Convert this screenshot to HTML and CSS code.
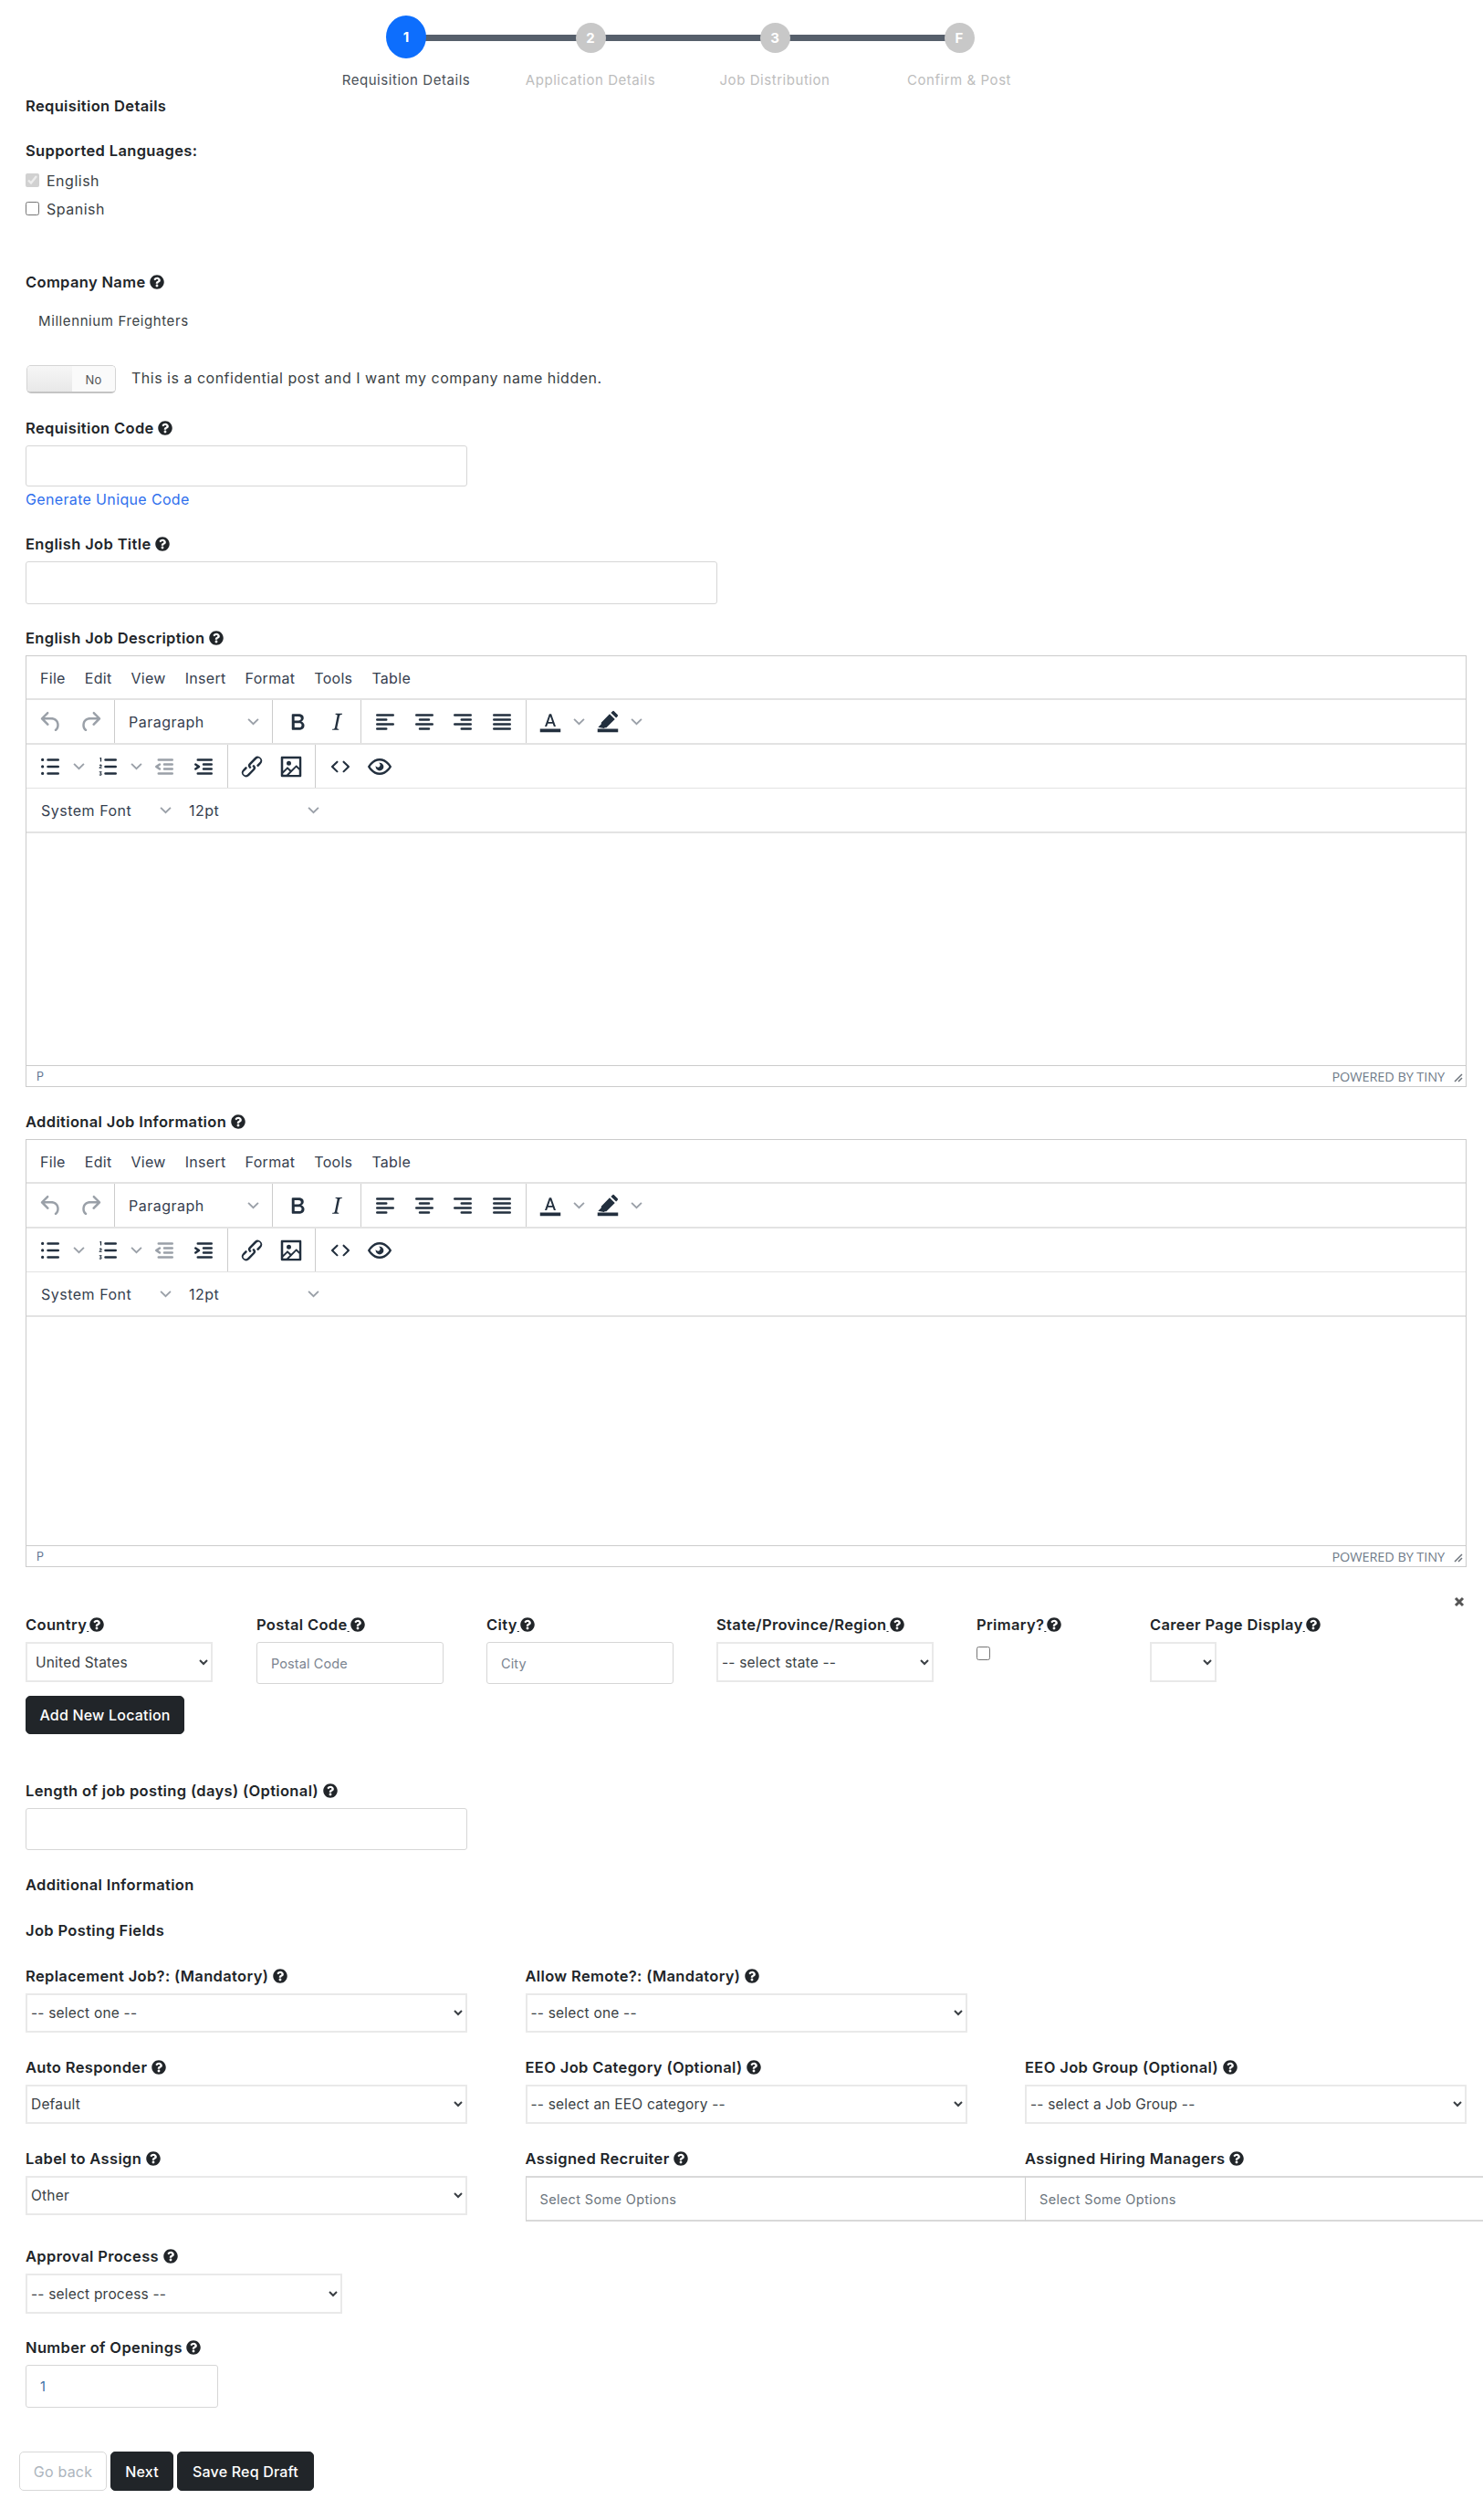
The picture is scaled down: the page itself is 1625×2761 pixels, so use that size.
FILE: index.html
```html
<!DOCTYPE html>
<html lang="en">

<head>
  <meta charset="UTF-8">
  <title>Requisition Details</title>
  <link rel="stylesheet" href="styles.css">
</head>

<body>
  <svg class="sprite" xmlns="http://www.w3.org/2000/svg">
    <symbol id="help" viewBox="0 0 512 512"><path d="M504 256c0 136.997-111.043 248-248 248S8 392.997 8 256C8 119.083 119.043 8 256 8s248 111.083 248 248zM262.655 90c-54.497 0-89.255 22.957-116.549 63.758-3.536 5.286-2.353 12.415 2.715 16.258l34.699 26.31c5.205 3.947 12.621 3.008 16.665-2.122 17.864-22.658 30.113-35.797 57.303-35.797 20.429 0 45.698 13.148 45.698 32.958 0 14.976-12.363 22.667-32.534 33.976C247.128 238.528 216 254.941 216 296v4c0 6.627 5.373 12 12 12h56c6.627 0 12-5.373 12-12v-1.333c0-28.462 83.186-29.647 83.186-106.667 0-58.002-60.165-102-116.531-102zM256 338c-25.365 0-46 20.635-46 46 0 25.364 20.635 46 46 46s46-20.636 46-46c0-25.365-20.635-46-46-46z"/></symbol>
    <symbol id="undo" viewBox="0 0 24 24"><path d="M6.4 8H12c3.7 0 6.2 2 6.8 5.1.6 2.7-.4 5.6-2.3 6.8a1 1 0 0 1-1-1.800c1.100-.6 1.800-2.700 1.400-4.600-.5-2.100-2.100-3.500-4.900-3.500H6.400l3.300 3.300a1 1 0 1 1-1.400 1.400l-5-5a1 1 0 0 1 0-1.400l5-5a1 1 0 0 1 1.400 1.400L6.400 8z"/></symbol>
    <symbol id="redo" viewBox="0 0 24 24"><path d="M17.600 8H12c-3.700 0-6.200 2-6.800 5.100-.6 2.700.4 5.600 2.300 6.800a1 1 0 0 0 1-1.800c-1.100-.6-1.800-2.700-1.400-4.600.5-2.100 2.100-3.500 4.900-3.500h5.600l-3.300 3.300a1 1 0 1 0 1.400 1.400l5-5a1 1 0 0 0 0-1.400l-5-5a1 1 0 0 0-1.400 1.400L17.600 8z"/></symbol>
    <symbol id="bold" viewBox="0 0 24 24"><path d="M7.800 19c-.3 0-.5 0-.6-.2l-.2-.5V5.700c0-.2 0-.4.2-.5l.6-.2h5c1.500 0 2.700.3 3.500 1 .7.600 1.100 1.400 1.100 2.500a3 3 0 0 1-.6 1.900c-.4.600-1 1-1.600 1.200.4.100.9.300 1.300.6s.8.700 1 1.200c.4.400.5 1 .5 1.600 0 1.300-.4 2.300-1.300 3-.8.700-2.100 1-3.800 1H7.800zm5-8.300c.6 0 1.200-.1 1.600-.5.400-.3.600-.7.600-1.300 0-1.100-.8-1.700-2.300-1.700H9.300v3.500h3.400zm.5 6c.7 0 1.300-.1 1.700-.4.400-.4.600-.9.600-1.500s-.2-1-.7-1.400c-.4-.3-1-.4-2-.4H9.400v3.800h4z"/></symbol>
    <symbol id="italic" viewBox="0 0 24 24"><path d="M16.700 4.700l-.1.900h-.3c-.6 0-1 0-1.400.3-.3.300-.4.600-.5 1.100l-2.100 9.800v.6c0 .5.400.8 1.400.8h.2l-.2.8H8l.2-.8h.2c1.100 0 1.800-.5 2-1.500l2-9.800.1-.5c0-.6-.4-.8-1.400-.8h-.3l.2-.9h5.800z"/></symbol>
    <symbol id="align-left" viewBox="0 0 24 24"><path d="M5 5h14a1 1 0 0 1 0 2H5a1 1 0 1 1 0-2zm0 4h8a1 1 0 0 1 0 2H5a1 1 0 1 1 0-2zm0 8h8a1 1 0 0 1 0 2H5a1 1 0 0 1 0-2zm0-4h14a1 1 0 0 1 0 2H5a1 1 0 0 1 0-2z"/></symbol>
    <symbol id="align-center" viewBox="0 0 24 24"><path d="M5 5h14a1 1 0 0 1 0 2H5a1 1 0 1 1 0-2zm3 4h8a1 1 0 0 1 0 2H8a1 1 0 1 1 0-2zm0 8h8a1 1 0 0 1 0 2H8a1 1 0 0 1 0-2zm-3-4h14a1 1 0 0 1 0 2H5a1 1 0 0 1 0-2z"/></symbol>
    <symbol id="align-right" viewBox="0 0 24 24"><path d="M5 5h14a1 1 0 0 1 0 2H5a1 1 0 1 1 0-2zm6 4h8a1 1 0 0 1 0 2h-8a1 1 0 0 1 0-2zm0 8h8a1 1 0 0 1 0 2h-8a1 1 0 0 1 0-2zm-6-4h14a1 1 0 0 1 0 2H5a1 1 0 0 1 0-2z"/></symbol>
    <symbol id="align-justify" viewBox="0 0 24 24"><path d="M5 5h14a1 1 0 0 1 0 2H5a1 1 0 1 1 0-2zm0 4h14a1 1 0 0 1 0 2H5a1 1 0 1 1 0-2zm0 4h14a1 1 0 0 1 0 2H5a1 1 0 0 1 0-2zm0 4h14a1 1 0 0 1 0 2H5a1 1 0 0 1 0-2z"/></symbol>
    <symbol id="text-color" viewBox="0 0 24 24"><path d="M3 18h18v3H3z"/><path fill-rule="evenodd" d="M8.900 16H7.200l3.900-11h1.800l3.900 11h-1.700l-.9-2.700H9.800zm1.400-4.100h3.400L12 6.900z"/></symbol>
    <symbol id="highlight" viewBox="0 0 24 24"><path d="M3 18h18v3H3z"/><path d="M3.500 16.500l2.800-2.700-.1-1.300L13.600 5l4.600 4.600-7.500 7.400-1.300-.1-.7.600zM14.700 3.900l1.300-1.200a1.200 1.200 0 0 1 1.700 0l2.800 2.800a1.200 1.200 0 0 1 0 1.700l-1.200 1.200z"/></symbol>
    <symbol id="bullist" viewBox="0 0 24 24"><path d="M10 5h9a1 1 0 0 1 0 2h-9a1 1 0 0 1 0-2zm0 6h9a1 1 0 0 1 0 2h-9a1 1 0 0 1 0-2zm0 6h9a1 1 0 0 1 0 2h-9a1 1 0 0 1 0-2zM4 6a1.300 1.300 0 1 1 2.600 0A1.300 1.300 0 0 1 4 6zm0 6a1.300 1.300 0 1 1 2.600 0A1.300 1.300 0 0 1 4 12zm0 6a1.300 1.300 0 1 1 2.600 0A1.300 1.300 0 0 1 4 18z"/></symbol>
    <symbol id="numlist" viewBox="0 0 24 24"><path d="M10 17h9a1 1 0 0 1 0 2h-9a1 1 0 0 1 0-2zm0-6h9a1 1 0 0 1 0 2h-9a1 1 0 0 1 0-2zm0-6h9a1 1 0 0 1 0 2h-9a1 1 0 1 1 0-2z"/><path d="M5.300 4h1.200v3.500h-1V5H5zM4.600 10.800c.2-.6.800-.9 1.400-.8.600.1 1 .6.900 1.100 0 .4-.3.700-.6.900l-.8.500h1.400v.8H4.500v-.7l1.400-1.100c.2-.1.200-.3.100-.4-.2-.2-.4 0-.5.200zM4.600 16.200h2.200v.6l-.8.700c.6.100.9.500.9 1 0 .7-.6 1.200-1.300 1.200-.5 0-1-.2-1.200-.6l.6-.5c.1.200.3.300.6.300.2 0 .4-.2.400-.4s-.2-.3-.5-.3h-.3v-.6l.6-.6H4.600z"/></symbol>
    <symbol id="outdent" viewBox="0 0 24 24"><path d="M7 5h12a1 1 0 0 1 0 2H7a1 1 0 1 1 0-2zm5 4h7a1 1 0 0 1 0 2h-7a1 1 0 0 1 0-2zm0 4h7a1 1 0 0 1 0 2h-7a1 1 0 0 1 0-2zm-5 4h12a1 1 0 0 1 0 2H7a1 1 0 0 1 0-2zm1.600-3.800a1 1 0 0 1-1.200 1.600l-3-2a1 1 0 0 1 0-1.600l3-2a1 1 0 0 1 1.200 1.600L6.800 12l1.800 1.200z"/></symbol>
    <symbol id="indent" viewBox="0 0 24 24"><path d="M7 5h12a1 1 0 0 1 0 2H7a1 1 0 1 1 0-2zm5 4h7a1 1 0 0 1 0 2h-7a1 1 0 0 1 0-2zm0 4h7a1 1 0 0 1 0 2h-7a1 1 0 0 1 0-2zm-5 4h12a1 1 0 0 1 0 2H7a1 1 0 0 1 0-2zm-2.600-3.800L6.200 12l-1.800-1.200a1 1 0 0 1 1.200-1.600l3 2a1 1 0 0 1 0 1.600l-3 2a1 1 0 1 1-1.200-1.600z"/></symbol>
    <symbol id="link" viewBox="0 0 24 24"><path d="M6.200 12.300a1 1 0 0 1 1.400 1.400l-2 2a2 2 0 1 0 2.600 2.800l4.800-4.800a1 1 0 0 0 0-1.400 1 1 0 1 1 1.400-1.300 2.900 2.900 0 0 1 0 4L9.600 20a3.900 3.900 0 0 1-5.500-5.500l2-2.200zm11.600-.6a1 1 0 0 1-1.400-1.400l2-2a2 2 0 1 0-2.600-2.800L11 10.300a1 1 0 0 0 0 1.400A1 1 0 1 1 9.600 13a2.900 2.900 0 0 1 0-4L14.400 4a3.900 3.900 0 0 1 5.500 5.500l-2 2.200z"/></symbol>
    <symbol id="image" viewBox="0 0 24 24"><path d="M5 15.700l3.300-3.200c.3-.3.700-.3 1 0L12 15l4.100-4c.3-.4.800-.4 1 0l2 1.900V5H5v10.700zM5 18v1h3l2.800-2.900-2-2L5 17.900zm14-3l-2.500-2.400-6.400 6.500H19v-4zM4 3h16c.6 0 1 .4 1 1v16c0 .6-.4 1-1 1H4a1 1 0 0 1-1-1V4c0-.6.400-1 1-1zm6 8a2 2 0 1 0 0-4 2 2 0 0 0 0 4z"/></symbol>
    <symbol id="code" viewBox="0 0 24 24"><path d="M9.800 15.700c.3.300.3.800 0 1-.3.400-.9.400-1.200 0l-4.400-4.100a.8.800 0 0 1 0-1.200l4.400-4.200c.3-.3.900-.3 1.200 0 .3.300.3.800 0 1.100L6 12l3.800 3.700zm4.400 0c-.3.300-.3.800 0 1 .3.400.9.400 1.200 0l4.400-4.100c.3-.3.300-.9 0-1.200l-4.400-4.200a.8.800 0 0 0-1.200 0c-.3.300-.3.800 0 1.100L18 12l-3.800 3.700z"/></symbol>
    <symbol id="eye" viewBox="0 0 24 24"><path fill-rule="evenodd" d="M12 4.800c3.200 0 6 1.500 8.200 4a17 17 0 0 1 2.300 3.200 17 17 0 0 1-2.300 3.200c-2.200 2.500-5 4-8.200 4s-6-1.500-8.200-4A17 17 0 0 1 1.500 12a17 17 0 0 1 2.300-3.200c2.200-2.500 5-4 8.200-4zm0 2c-2.500 0-4.700 1.200-6.700 3.200-.7.700-1.300 1.400-1.600 2 .3.600.9 1.300 1.600 2 2 2 4.200 3.200 6.700 3.200s4.700-1.200 6.700-3.200c.7-.7 1.300-1.400 1.600-2-.3-.6-.9-1.300-1.600-2-2-2-4.200-3.200-6.700-3.200zm0 1.700a3.500 3.500 0 1 1-3.500 3.500c0-.3 0-.6.100-.9a2 2 0 1 0 2.500-2.500c.3-.1.600-.1.900-.1z"/></symbol>
    <symbol id="chevron" viewBox="0 0 12 8"><path d="M1 1.500l5 5 5-5" fill="none" stroke="currentColor" stroke-width="1.700"/></symbol>
  </svg>

  <main class="page">
    <div class="stepper">
      <div class="step step-active"><span class="step-dot">1</span><span class="step-name">Requisition Details</span></div>
      <div class="step"><span class="step-dot">2</span><span class="step-name">Application Details</span></div>
      <div class="step"><span class="step-dot">3</span><span class="step-name">Job Distribution</span></div>
      <div class="step"><span class="step-dot">F</span><span class="step-name">Confirm &amp; Post</span></div>
    </div>

    <div class="label sect-head">Requisition Details</div>

    <div class="label lang-head">Supported Languages:</div>
    <label class="check-row"><input type="checkbox" checked disabled> English</label>
    <label class="check-row"><input type="checkbox"> Spanish</label>

    <div class="label company-label">Company Name <svg class="help"><use href="#help"/></svg></div>
    <div class="company-name">Millennium Freighters</div>

    <div class="confidential">
      <div class="switch"><span class="switch-handle"></span><span class="switch-off">No</span></div>
      <span class="confidential-text">This is a confidential post and I want my company name hidden.</span>
    </div>

    <div class="label">Requisition Code <svg class="help"><use href="#help"/></svg></div>
    <input class="input w-third h-45" type="text">
    <a class="gen-link" href="#">Generate Unique Code</a>

    <div class="label">English Job Title <svg class="help"><use href="#help"/></svg></div>
    <input class="input w-title" type="text">

    <div class="label after-input">English Job Description <svg class="help"><use href="#help"/></svg></div>
    <div class="editor">
      <div class="menubar"><span>File</span><span>Edit</span><span>View</span><span>Insert</span><span>Format</span><span>Tools</span><span>Table</span></div>
      <div class="toolbar thick">
        <div class="group g-history">
          <span class="tb muted"><svg><use href="#undo"/></svg></span>
          <span class="tb muted"><svg><use href="#redo"/></svg></span>
        </div>
        <div class="group g-block"><span class="pick-text">Paragraph</span><svg class="chev"><use href="#chevron"/></svg></div>
        <div class="group g-format">
          <span class="tb"><svg><use href="#bold"/></svg></span>
          <span class="tb"><svg><use href="#italic"/></svg></span>
        </div>
        <div class="group g-align">
          <span class="tb"><svg><use href="#align-left"/></svg></span>
          <span class="tb"><svg><use href="#align-center"/></svg></span>
          <span class="tb"><svg><use href="#align-right"/></svg></span>
          <span class="tb"><svg><use href="#align-justify"/></svg></span>
        </div>
        <div class="group g-color">
          <span class="tb"><svg><use href="#text-color"/></svg></span>
          <span class="tb-chev"><svg class="chev"><use href="#chevron"/></svg></span>
          <span class="tb"><svg><use href="#highlight"/></svg></span>
          <span class="tb-chev"><svg class="chev"><use href="#chevron"/></svg></span>
        </div>
      </div>
      <div class="toolbar thin">
        <div class="group g-lists">
          <span class="tb"><svg><use href="#bullist"/></svg></span>
          <span class="tb-chev"><svg class="chev"><use href="#chevron"/></svg></span>
          <span class="tb"><svg><use href="#numlist"/></svg></span>
          <span class="tb-chev"><svg class="chev"><use href="#chevron"/></svg></span>
          <span class="tb muted"><svg><use href="#outdent"/></svg></span>
          <span class="tb"><svg><use href="#indent"/></svg></span>
        </div>
        <div class="group g-insert">
          <span class="tb"><svg><use href="#link"/></svg></span>
          <span class="tb"><svg><use href="#image"/></svg></span>
        </div>
        <div class="group g-tools">
          <span class="tb"><svg><use href="#code"/></svg></span>
          <span class="tb"><svg><use href="#eye"/></svg></span>
        </div>
      </div>
      <div class="toolbar thick fontbar">
        <span class="font-pick">System Font<svg class="chev"><use href="#chevron"/></svg></span>
        <span class="size-pick">12pt<svg class="chev"><use href="#chevron"/></svg></span>
      </div>
      <div class="edit-area"></div>
      <div class="statusbar"><span class="path">P</span><span class="brand">POWERED BY TINY</span><svg class="grip" viewBox="0 0 10 10"><path d="M1 9l8-8M5 9l4-4" fill="none" stroke="#6d737b" stroke-width="1.500"/></svg></div>
    </div>

    <div class="label editor-gap">Additional Job Information <svg class="help"><use href="#help"/></svg></div>
    <div class="editor">
      <div class="menubar"><span>File</span><span>Edit</span><span>View</span><span>Insert</span><span>Format</span><span>Tools</span><span>Table</span></div>
      <div class="toolbar thick">
        <div class="group g-history">
          <span class="tb muted"><svg><use href="#undo"/></svg></span>
          <span class="tb muted"><svg><use href="#redo"/></svg></span>
        </div>
        <div class="group g-block"><span class="pick-text">Paragraph</span><svg class="chev"><use href="#chevron"/></svg></div>
        <div class="group g-format">
          <span class="tb"><svg><use href="#bold"/></svg></span>
          <span class="tb"><svg><use href="#italic"/></svg></span>
        </div>
        <div class="group g-align">
          <span class="tb"><svg><use href="#align-left"/></svg></span>
          <span class="tb"><svg><use href="#align-center"/></svg></span>
          <span class="tb"><svg><use href="#align-right"/></svg></span>
          <span class="tb"><svg><use href="#align-justify"/></svg></span>
        </div>
        <div class="group g-color">
          <span class="tb"><svg><use href="#text-color"/></svg></span>
          <span class="tb-chev"><svg class="chev"><use href="#chevron"/></svg></span>
          <span class="tb"><svg><use href="#highlight"/></svg></span>
          <span class="tb-chev"><svg class="chev"><use href="#chevron"/></svg></span>
        </div>
      </div>
      <div class="toolbar thin">
        <div class="group g-lists">
          <span class="tb"><svg><use href="#bullist"/></svg></span>
          <span class="tb-chev"><svg class="chev"><use href="#chevron"/></svg></span>
          <span class="tb"><svg><use href="#numlist"/></svg></span>
          <span class="tb-chev"><svg class="chev"><use href="#chevron"/></svg></span>
          <span class="tb muted"><svg><use href="#outdent"/></svg></span>
          <span class="tb"><svg><use href="#indent"/></svg></span>
        </div>
        <div class="group g-insert">
          <span class="tb"><svg><use href="#link"/></svg></span>
          <span class="tb"><svg><use href="#image"/></svg></span>
        </div>
        <div class="group g-tools">
          <span class="tb"><svg><use href="#code"/></svg></span>
          <span class="tb"><svg><use href="#eye"/></svg></span>
        </div>
      </div>
      <div class="toolbar thick fontbar">
        <span class="font-pick">System Font<svg class="chev"><use href="#chevron"/></svg></span>
        <span class="size-pick">12pt<svg class="chev"><use href="#chevron"/></svg></span>
      </div>
      <div class="edit-area short"></div>
      <div class="statusbar"><span class="path">P</span><span class="brand">POWERED BY TINY</span><svg class="grip" viewBox="0 0 10 10"><path d="M1 9l8-8M5 9l4-4" fill="none" stroke="#6d737b" stroke-width="1.500"/></svg></div>
    </div>

    <div class="location">
      <svg class="loc-close" viewBox="0 0 12 12"><path d="M2 2l8 8M10 2l-8 8" stroke="#555" stroke-width="3"/></svg>
      <div class="loc-grid">
        <div>
          <div class="label">Country<u class="gap">&nbsp;</u><svg class="help"><use href="#help"/></svg></div>
          <select class="select w-country h-44"><option>United States</option></select>
        </div>
        <div>
          <div class="label">Postal Code<u class="gap">&nbsp;</u><svg class="help"><use href="#help"/></svg></div>
          <input class="input w-full h-46" type="text" placeholder="Postal Code">
        </div>
        <div>
          <div class="label">City<u class="gap">&nbsp;</u><svg class="help"><use href="#help"/></svg></div>
          <input class="input w-full h-46" type="text" placeholder="City">
        </div>
        <div>
          <div class="label">State/Province/Region<u class="gap">&nbsp;</u><svg class="help"><use href="#help"/></svg></div>
          <select class="select w-full h-44"><option>-- select state --</option></select>
        </div>
        <div>
          <div class="label">Primary?<u class="gap">&nbsp;</u><svg class="help"><use href="#help"/></svg></div>
          <input class="primary-check" type="checkbox">
        </div>
        <div>
          <div class="label">Career Page Display<u class="gap">&nbsp;</u><svg class="help"><use href="#help"/></svg></div>
          <select class="select career h-44"><option></option></select>
        </div>
      </div>
      <button class="btn add-location" type="button">Add New Location</button>
    </div>

    <div class="label length-label">Length of job posting (days) (Optional) <svg class="help"><use href="#help"/></svg></div>
    <input class="input w-third h-46" type="text">

    <div class="label info-head">Additional Information</div>
    <div class="label fields-head">Job Posting Fields</div>

    <div class="field-grid">
      <div>
        <div class="label">Replacement Job?: (Mandatory) <svg class="help"><use href="#help"/></svg></div>
        <select class="select w-full"><option>-- select one --</option></select>
      </div>
      <div>
        <div class="label">Allow Remote?: (Mandatory) <svg class="help"><use href="#help"/></svg></div>
        <select class="select w-full"><option>-- select one --</option></select>
      </div>
      <div></div>
      <div>
        <div class="label">Auto Responder <svg class="help"><use href="#help"/></svg></div>
        <select class="select w-full"><option>Default</option></select>
      </div>
      <div>
        <div class="label">EEO Job Category (Optional) <svg class="help"><use href="#help"/></svg></div>
        <select class="select w-full"><option>-- select an EEO category --</option></select>
      </div>
      <div>
        <div class="label">EEO Job Group (Optional) <svg class="help"><use href="#help"/></svg></div>
        <select class="select w-full"><option>-- select a Job Group --</option></select>
      </div>
      <div>
        <div class="label">Label to Assign <svg class="help"><use href="#help"/></svg></div>
        <select class="select w-full"><option>Other</option></select>
      </div>
      <div>
        <div class="label">Assigned Recruiter <svg class="help"><use href="#help"/></svg></div>
        <div class="chosen">Select Some Options</div>
      </div>
      <div>
        <div class="label">Assigned Hiring Managers <svg class="help"><use href="#help"/></svg></div>
        <div class="chosen chosen-last">Select Some Options</div>
      </div>
    </div>

    <div class="label approval-label">Approval Process <svg class="help"><use href="#help"/></svg></div>
    <select class="select w-approval h-44"><option>-- select process --</option></select>

    <div class="label after-approval">Number of Openings <svg class="help"><use href="#help"/></svg></div>
    <input class="input w-openings" type="text" value="1">

    <div class="actions">
      <button class="btn btn-back" type="button">Go back</button>
      <button class="btn btn-next" type="button">Next</button>
      <button class="btn btn-save" type="button">Save Req Draft</button>
    </div>
  </main>
</body>

</html>
```

FILE: styles.css
```css
* {
  box-sizing: border-box;
}
html, body {
  margin: 0;
  padding: 0;
  background: #fff;
}
body {
  font-family: Inter, "Liberation Sans", sans-serif;
  font-size: 16px;
  letter-spacing: 0.5px;
  color: #212529;
  overflow-x: hidden;
}
.sprite {
  display: none;
}
.page {
  height: 2761px;
  padding: 0 18px 0 28px;
  overflow: hidden;
}

/* stepper */
.stepper {
  display: flex;
  height: 104px;
  margin-left: 316px;
}
.step {
  position: relative;
  width: 202px;
  display: flex;
  flex-direction: column;
  align-items: center;
  color: #bdbdbd;
  font-size: 15px;
  letter-spacing: 0.55px;
}
.step::before {
  content: "";
  position: absolute;
  top: 38px;
  left: 50%;
  width: 202px;
  height: 7px;
  background: #565f6b;
}
.step:last-child::before {
  display: none;
}
.step-dot {
  position: relative;
  width: 33px;
  height: 33px;
  margin: 25px 0 18px;
  border-radius: 50%;
  background: #c8c8c8;
  color: #fff;
  font-weight: 700;
  font-size: 15px;
  letter-spacing: 0;
  line-height: 33px;
  text-align: center;
}
.step-active {
  color: #495057;
}
.step-active .step-dot {
  width: 44px;
  height: 47px;
  margin: 17px 0 12px;
  background: #0d6efd;
  line-height: 47px;
}
.step-name {
  line-height: 24px;
  white-space: nowrap;
}

/* labels and fields */
.label {
  height: 24px;
  line-height: 24px;
  margin-bottom: 7px;
  font-size: 16.5px;
  font-weight: 600;
  letter-spacing: 0.35px;
  color: #212529;
  white-space: nowrap;
}
.help {
  width: 16px;
  height: 16px;
  vertical-align: -2px;
  fill: #212529;
}
.gap {
  font-size: 6px;
  font-weight: 400;
  margin-right: 1px;
}
.sect-head {
  margin-bottom: 25px;
}
.lang-head {
  margin-bottom: 5px;
}
.check-row {
  display: flex;
  align-items: center;
  gap: 8px;
  height: 31px;
  color: #3a3f44;
}
.check-row input {
  width: 15px;
  height: 15px;
  margin: 0;
}
.company-label {
  margin-top: 53px;
  margin-bottom: 19px;
}
.company-name {
  height: 24px;
  line-height: 24px;
  padding-left: 14px;
  font-size: 15px;
  letter-spacing: 0.6px;
  color: #3a3f44;
}
.confidential {
  display: flex;
  align-items: center;
  gap: 17px;
  height: 31px;
  margin: 36px 0 26px;
  color: #3a3f44;
}
.confidential-text {
  margin-bottom: 3px;
}
.switch {
  display: flex;
  width: 98px;
  height: 31px;
  margin-left: 1px;
  border: 1px solid #d4d4d4;
  border-bottom: 2px solid #c4c4c4;
  border-radius: 5px;
  overflow: hidden;
}
.switch-handle {
  width: 49px;
  background: linear-gradient(#f6f6f6, #e8e8e8);
}
.switch-off {
  flex: 1;
  text-align: center;
  line-height: 30px;
  font-size: 13px;
  letter-spacing: 0.3px;
  color: #555;
  background: #fafafa;
}
.input {
  display: block;
  height: 47px;
  padding: 0 15px;
  border: 1px solid #d6d6d6;
  border-radius: 3px;
  background: #fff;
  font: inherit;
  font-size: 14.5px;
  letter-spacing: 0.1px;
  color: #3a6ea5;
}
.input::placeholder {
  color: #7b8490;
}
.select {
  display: block;
  height: 43px;
  padding: 0;
  border: 2px solid #e9e9e9;
  border-radius: 0;
  background: #fff;
  font: inherit;
  font-size: 15.5px;
  letter-spacing: 0.2px;
  color: #3a3f44;
}
.h-44 {
  height: 44px;
}
.h-45 {
  height: 45px;
}
.h-46 {
  height: 46px;
}
.w-full {
  width: 100%;
}
.w-country {
  width: 205px;
  padding-left: 5px;
}
.w-third {
  width: 484px;
}
.w-title {
  width: 758px;
}
.w-approval {
  width: 347px;
}
.w-openings {
  width: 211px;
}
.career {
  width: 73px;
}
.gen-link {
  display: block;
  height: 24px;
  margin: 2px 0 25px;
  line-height: 24px;
  letter-spacing: 0.35px;
  color: #2f6fed;
  text-decoration: none;
}
.after-input {
  margin-top: 25px;
}

/* editor */
.editor {
  border: 1px solid #ccc;
  background: #fff;
  color: #36404f;
}
.menubar {
  display: flex;
  gap: 21px;
  height: 48px;
  padding: 1px 0 0 15px;
  align-items: center;
  border-bottom: 2px solid #e3e3e3;
  letter-spacing: 0.3px;
}
.toolbar {
  display: flex;
  height: 49px;
}
.thick {
  border-bottom: 2px solid #e3e3e3;
}
.thin {
  height: 48px;
  border-bottom: 1px solid #e3e3e3;
}
.group {
  display: flex;
  align-items: center;
  height: 100%;
  border-right: 1px solid #ccc;
}
.g-history {
  width: 97px;
  padding-left: 6px;
}
.g-block {
  width: 173px;
  padding-left: 15px;
  justify-content: space-between;
  padding-right: 14px;
}
.g-format {
  width: 97px;
  padding-left: 6px;
}
.g-align {
  width: 181px;
  padding-left: 5px;
}
.g-color {
  border-right: 0;
  padding-left: 5px;
}
.g-lists {
  width: 221px;
  padding-left: 5px;
}
.g-insert {
  width: 96px;
  padding-left: 5px;
}
.g-tools {
  border-right: 0;
  padding-left: 6px;
}
.tb {
  display: flex;
  align-items: center;
  justify-content: center;
  width: 42.5px;
  height: 100%;
  fill: #222f3e;
}
.tb svg {
  width: 30px;
  height: 30px;
}
.tb-chev {
  display: flex;
  align-items: center;
  justify-content: center;
  width: 20px;
  height: 100%;
}
.muted {
  fill: #9aa0a8;
}
.chev {
  width: 13px;
  height: 9px;
  color: #9aa0a8;
}
.fontbar {
  align-items: center;
  padding-left: 16px;
}
.font-pick {
  display: flex;
  align-items: center;
  justify-content: space-between;
  width: 143px;
}
.size-pick {
  display: flex;
  align-items: center;
  justify-content: space-between;
  width: 143px;
  margin-left: 19px;
}
.edit-area {
  height: 254px;
}
.edit-area.short {
  height: 250px;
}
.statusbar {
  display: flex;
  align-items: center;
  height: 23px;
  padding: 0 3px 0 11px;
  border-top: 1px solid #ccc;
}
.path {
  font-size: 12.5px;
  color: #5f7390;
  flex: 1;
}
.brand {
  font-family: "Open Sans", sans-serif;
  font-size: 14.5px;
  color: #6f7b88;
  letter-spacing: -0.1px;
}
.grip {
  width: 10px;
  height: 10px;
  margin: 4px 0 0 10px;
}
.editor-gap {
  margin-top: 26px;
}

/* location block */
.location {
  position: relative;
  margin-top: 51px;
}
.loc-close {
  position: absolute;
  top: -19px;
  right: 2px;
  width: 12px;
  height: 12px;
}
.loc-grid {
  display: grid;
  grid-template-columns: 206px 205px 205px 238px 143px auto;
  column-gap: 47px;
  height: 90px;
}
.primary-check {
  display: block;
  width: 15px;
  height: 15px;
  margin: 12px 0 0;
}
.btn {
  height: 43px;
  padding: 0;
  border: 1px solid #212529;
  border-radius: 5px;
  background: #212529;
  color: #fff;
  font: inherit;
  font-size: 16px;
  letter-spacing: 0.2px;
  font-weight: 500;
}
.add-location {
  display: block;
  width: 174px;
  height: 42px;
}
.length-label {
  margin-top: 50px;
}
.info-head {
  margin-top: 26px;
  margin-bottom: 26px;
}
.fields-head {
  margin-bottom: 26px;
}

/* three column field grid */
.field-grid {
  display: grid;
  grid-template-columns: repeat(3, 484px);
  column-gap: 63.5px;
  grid-auto-rows: 100px;
}
.chosen {
  width: 548px;
  height: 50px;
  padding: 0 15px;
  border-top: 2px solid #d9d9d9;
  border-bottom: 2px solid #d9d9d9;
  border-left: 1px solid #d0d0d0;
  line-height: 47px;
  font-size: 14.5px;
  letter-spacing: 0.35px;
  color: #6c757d;
}
.chosen-last {
  width: 520px;
}
.approval-label {
  margin-top: 7px;
}
.after-approval {
  margin-top: 25px;
}
.actions {
  display: flex;
  gap: 4px;
  margin: 48px 0 0 -7px;
}
.btn-back {
  width: 96px;
  background: #fff;
  border-color: #d8d8d8;
  color: #adb5bd;
  font-weight: 400;
}
.btn-next {
  width: 69px;
}
.btn-save {
  width: 150px;
}
```
